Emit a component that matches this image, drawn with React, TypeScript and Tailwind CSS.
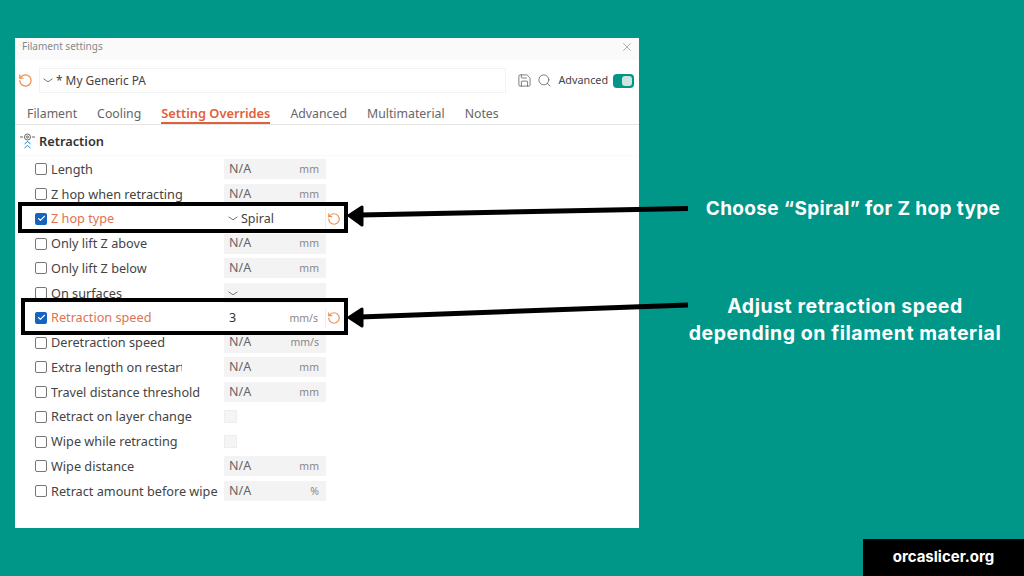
import { Check, Search, Save, X, RotateCcw } from 'lucide-react';

type Field =
  | { label: string; kind: 'input'; value?: string; unit: string; on?: boolean; clip?: boolean }
  | { label: string; kind: 'select'; value?: string; on?: boolean; clip?: boolean }
  | { label: string; kind: 'check'; clip?: boolean };

const FIELDS: Field[] = [
  { label: 'Length', kind: 'input', unit: 'mm' },
  { label: 'Z hop when retracting', kind: 'input', unit: 'mm' },
  { label: 'Z hop type', kind: 'select', value: 'Spiral', on: true },
  { label: 'Only lift Z above', kind: 'input', unit: 'mm' },
  { label: 'Only lift Z below', kind: 'input', unit: 'mm' },
  { label: 'On surfaces', kind: 'select' },
  { label: 'Retraction speed', kind: 'input', value: '3', unit: 'mm/s', on: true },
  { label: 'Deretraction speed', kind: 'input', unit: 'mm/s' },
  { label: 'Extra length on restart', kind: 'input', unit: 'mm', clip: true },
  { label: 'Travel distance threshold', kind: 'input', unit: 'mm' },
  { label: 'Retract on layer change', kind: 'check' },
  { label: 'Wipe while retracting', kind: 'check' },
  { label: 'Wipe distance', kind: 'input', unit: 'mm' },
  { label: 'Retract amount before wipe', kind: 'input', unit: '%' },
];

const TABS = ['Filament', 'Cooling', 'Setting Overrides', 'Advanced', 'Multimaterial', 'Notes'];

// wide, shallow dropdown chevron
function Chevron() {
  return (
    <svg width="10" height="5" viewBox="0 0 10 5" fill="none" stroke="#777" strokeWidth="1" className="shrink-0">
      <path d="M0.500 0.800L5 3.800L9.500 0.800" />
    </svg>
  );
}

function FieldRow({ field }: { field: Field }) {
  const on = field.kind !== 'check' && field.on;
  return (
    <div className="flex h-[24.75px] items-center pl-[20px]">
      {on ? (
        <span className="flex h-3 w-3 items-center justify-center rounded-[2px] bg-[#1565c0]">
          <Check size={9} strokeWidth={3} className="text-white" />
        </span>
      ) : (
        <span className="h-3 w-3 rounded-[2px] border border-[#777]" />
      )}
      <div className="ml-[4px] w-[173px]">
        <div
          className={`overflow-hidden text-[12.7px] whitespace-nowrap ${field.clip ? 'w-[131px]' : ''} ${on ? 'text-[#dd7350]' : 'text-[#444]'}`}
        >
          {field.label}
        </div>
      </div>
      {field.kind === 'input' && (
        <div
          className={`flex h-[20px] w-[102px] items-center justify-between pr-[7px] pl-[5px] ${on ? 'border-r border-[#eee] bg-white' : 'bg-[#f3f3f3]'}`}
        >
          <span className={`text-[12.5px] ${on ? 'text-[#333]' : 'text-[#666]'}`}>{field.value ?? 'N/A'}</span>
          <span className="pt-[1px] text-[10.5px] text-[#888]">{field.unit}</span>
        </div>
      )}
      {field.kind === 'select' && (
        <div
          className={`flex h-[20px] w-[102px] items-center gap-[3px] pl-[4px] ${on ? 'border-r border-[#eee] bg-white' : 'bg-[#f3f3f3]'}`}
        >
          <Chevron />
          <span className="text-[12.5px] text-[#444]">{field.value}</span>
        </div>
      )}
      {field.kind === 'check' && <span className="h-[13px] w-[13px] border border-[#eee] bg-[#f5f5f5]" />}
      {on && <RotateCcw size={14} strokeWidth={2} className="ml-[1px] text-[#ec8f4e]" />}
    </div>
  );
}

export default function App() {
  return (
    <div className="relative flex h-[576px] w-[1024px] overflow-hidden bg-[#009688] font-['Noto_Sans',sans-serif]">
      <div className="mt-[38px] ml-[15px] flex h-[490px] w-[624px] flex-col bg-white">
        <div className="flex h-[22px] items-center justify-between bg-[#fafafa] pr-[5px] pb-[5px] pl-[7px] text-[10px] text-[#888]">
          <span>Filament settings</span>
          <X size={14} strokeWidth={1} className="text-[#777]" />
        </div>

        <div className="mt-[8px] flex h-[25px] items-center pr-[5px] pl-[3px]">
          <RotateCcw size={15} strokeWidth={2} className="text-[#ec8f4e]" />
          <div className="ml-[6px] flex h-[25px] w-[469px] items-center gap-[3px] border border-[#f2f2f2] pl-[3px] text-[11.9px] text-[#444]">
            <Chevron />
            <span>* My Generic PA</span>
          </div>
          <Save size={15} strokeWidth={1.2} className="ml-[11px] text-[#555]" />
          <Search size={15} strokeWidth={1.2} className="ml-[5px] text-[#555]" />
          <span className="ml-[6px] text-[10.8px] text-[#444]">Advanced</span>
          <span className="ml-[5px] flex h-[14px] w-[21px] items-center justify-end rounded-[4px] bg-[#009688] pr-[2px]">
            <span className="h-[10px] w-[10px] rounded-[3px] bg-[#cfe3df]" />
          </span>
        </div>

        <div className="mt-[8px] flex h-[24px] items-center gap-[20px] border-b border-[#e4e4e4] pt-[3px] pl-[12px] text-[12.3px] text-[#666]">
          {TABS.map((tab) =>
            tab === 'Setting Overrides' ? (
              <span
                key={tab}
                className="flex h-full items-center border-b-2 border-[#e0603c] pt-[2px] text-[12.8px] font-semibold text-[#e0603c]"
              >
                {tab}
              </span>
            ) : (
              <span key={tab}>{tab}</span>
            ),
          )}
        </div>

        <div className="flex h-[31px] items-center gap-[4px] border-b border-[#fafafa] pt-[3px] pl-[5px]">
          <svg width="15" height="17" viewBox="0 0 15 17" fill="none" stroke="#666" strokeWidth="1">
            <path d="M0 4h3M12 4h3" />
            <circle cx="7.500" cy="4" r="3" />
            <circle cx="7.500" cy="4" r="1" />
            <path d="M4.500 11l3-2.500 3 2.500M4.500 15l3-2.500 3 2.500" stroke="#1e88c7" />
          </svg>
          <span className="text-[12.8px] font-semibold text-[#333]">Retraction</span>
        </div>

        <div className="pt-[1px]">
          {FIELDS.map((f) => (
            <FieldRow key={f.label} field={f} />
          ))}
        </div>
      </div>

      <div className="ml-[48px] flex w-[316px] flex-col items-center pt-[197px] font-['Inter',sans-serif] font-bold text-white">
        <p className="ml-[16px] text-[19px] leading-[24px] tracking-[0.35px] whitespace-nowrap">
          Choose “Spiral” for Z hop type
        </p>
        <p className="mt-[72px] text-center text-[19.5px] leading-[27px] tracking-[0.55px] whitespace-nowrap">
          Adjust retraction speed
          <br />
          depending on filament material
        </p>
      </div>

      {/* highlight boxes and arrows sit over the window */}
      <div className="absolute top-[202px] left-[18px] h-[31px] w-[330px] border-4 border-black" />
      <div className="absolute top-[298px] left-[21px] h-[37px] w-[327px] border-4 border-black" />
      <svg className="absolute top-0 left-0" width="1024" height="576" fill="black" stroke="black">
        <path d="M688 208.500L360 215" strokeWidth="5" />
        <path d="M349 215.500L362 207V225Z" strokeWidth="3" strokeLinejoin="round" />
        <path d="M688 305L360 317" strokeWidth="5" />
        <path d="M349 317.500L362 309V326Z" strokeWidth="3" strokeLinejoin="round" />
      </svg>

      <div className="absolute right-0 bottom-0 flex h-[37px] w-[161px] items-center justify-center bg-black pb-[1px] font-['Inter',sans-serif] text-[15px] font-bold text-white">
        orcaslicer.org
      </div>
    </div>
  );
}
